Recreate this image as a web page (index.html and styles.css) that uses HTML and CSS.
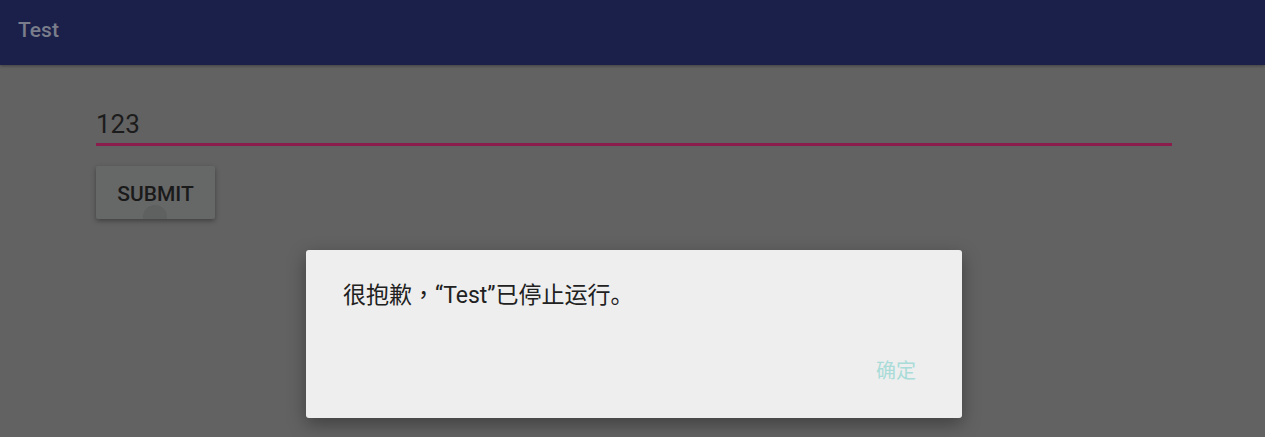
FILE: index.html
```html
<!DOCTYPE html>
<html lang="zh">
<head>
<meta charset="utf-8">
<link rel="stylesheet" href="styles.css">
</head>
<body>
<div class="app">
  <header class="toolbar"><span class="title">Test</span></header>
  <main class="content">
    <div class="field"><span class="value">123</span></div>
    <div class="btn-row">
      <button class="submit">SUBMIT<span class="ripple"></span></button>
    </div>
  </main>
  <div class="dialog">
    <p class="message">很抱歉<span class="comma" lang="zh-Hant">，</span>“Test”已停止运行。</p>
    <div class="actions"><span class="ok">确定</span></div>
  </div>
</div>
</body>
</html>
```
FILE: styles.css
```css
html, body {
  margin: 0;
  padding: 0;
  width: 1265px;
  height: 437px;
  overflow: hidden;
  background: #626262;
  font-family: Roboto, "Noto Sans CJK SC", sans-serif;
}
.app {
  position: relative;
  width: 1265px;
  height: 437px;
}
.toolbar {
  height: 65px;
  background: #1a2049;
  display: flex;
  align-items: center;
  padding-left: 18px;
  box-shadow: 0 1px 3px rgba(0,0,0,0.35);
}
.title {
  color: #7a7d8b;
  font-size: 21px;
  font-weight: 500;
  margin-top: -6px;
}
.content {
  padding: 0 93px 0 96px;
}
.field {
  margin-top: 42px;
  height: 36px;
  border-bottom: 3px solid #8a1d4b;
  display: flex;
  align-items: flex-end;
}
.value {
  font-size: 26px;
  color: #1c1c1c;
  line-height: 30px;
  padding-bottom: 4px;
}
.btn-row {
  margin-top: 20px;
}
.submit {
  position: relative;
  overflow: hidden;
  width: 119px;
  height: 53px;
  border: none;
  border-radius: 2px;
  background: #666767;
  color: #1a1a1a;
  font-family: Roboto, sans-serif;
  font-size: 21px;
  font-weight: 500;
  padding: 2px 0 0 0;
  box-shadow: 0 2px 5px rgba(0,0,0,0.35);
}
.ripple {
  position: absolute;
  left: 47px;
  top: 39px;
  width: 24px;
  height: 24px;
  border-radius: 50%;
  background: #5f6060;
}
.dialog {
  position: absolute;
  left: 306px;
  top: 250px;
  width: 656px;
  height: 168px;
  background: #eeeeee;
  border-radius: 3px;
  box-shadow: 0 6px 18px rgba(0,0,0,0.35);
  box-sizing: border-box;
  padding: 23px 46px 0 37px;
  display: flex;
  flex-direction: column;
}
.message {
  margin: 0;
  font-size: 23px;
  line-height: 40px;
  color: #212121;
}
.comma {
  display: inline-block;
  width: 23px;
  text-align: center;
  font-family: "Noto Sans CJK TC", sans-serif;
}
.actions {
  margin-top: 41px;
  display: flex;
  justify-content: flex-end;
}
.ok {
  font-size: 20px;
  color: #a9dcd8;
  line-height: 28px;
}
```
